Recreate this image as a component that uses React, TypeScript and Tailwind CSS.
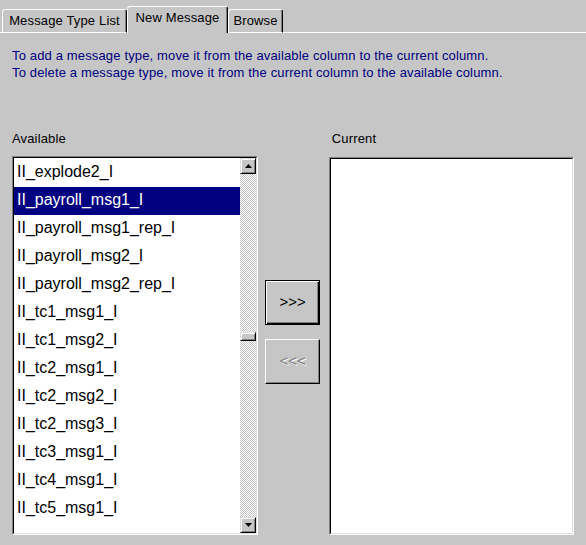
import React from 'react';

const items = [
  'II_explode2_I',
  'II_payroll_msg1_I',
  'II_payroll_msg1_rep_I',
  'II_payroll_msg2_I',
  'II_payroll_msg2_rep_I',
  'II_tc1_msg1_I',
  'II_tc1_msg2_I',
  'II_tc2_msg1_I',
  'II_tc2_msg2_I',
  'II_tc2_msg3_I',
  'II_tc3_msg1_I',
  'II_tc4_msg1_I',
  'II_tc5_msg1_I',
];

const ScrollButton = ({ up }: { up: boolean }) => (
  <div className="flex h-[16px] w-[16px] items-center justify-center border border-t-[#dfdfdf] border-l-[#dfdfdf] border-r-black border-b-black bg-[#c6c6c6] shadow-[inset_1px_1px_#fff,inset_-1px_-1px_#808080]">
    <svg width="7" height="4" viewBox="0 0 7 4">
      {up ? <polygon points="3.5,0 7,4 0,4" fill="#000" /> : <polygon points="0,0 7,0 3.5,4" fill="#000" />}
    </svg>
  </div>
);

const Tab = ({ label, width, active }: { label: string; width: string; active?: boolean }) => (
  <div
    className={`${width} flex items-center justify-center rounded-t-[3px] border-l border-t border-r border-l-white border-t-white border-r-black shadow-[inset_-1px_0_#808080] ${
      active ? 'h-[27px] pb-[4px]' : 'h-[24px] border-b border-b-white'
    }`}
  >
    <span>{label}</span>
  </div>
);

const App = () => {
  return (
    <div className="h-[545px] w-[586px] overflow-hidden bg-[#c6c6c6] font-['Liberation_Sans',Arial,sans-serif] text-[13px] tracking-[0.15px] text-black">
      {/* tabs */}
      <div className="flex h-[33px] items-end">
        <div className="h-px w-[2px] bg-white" />
        <Tab label="Message Type List" width="w-[125px]" />
        <Tab label="New Message" width="w-[101px]" active />
        <Tab label="Browse" width="w-[55px]" />
        <div className="h-px flex-1 bg-white" />
      </div>

      <div className="px-[12px] pt-[14px]">
        <div className="leading-[17px] text-[#000080]">
          <div>To add a message type, move it from the available column to the current column.</div>
          <div>To delete a message type, move it from the current column to the available column.</div>
        </div>

        <div className="mt-[49px] flex items-start">
          {/* available */}
          <div className="w-[248px]">
            <div className="h-[17px] leading-[17px]">Available</div>
            <div className="mt-[9px] h-[379px] border border-t-[#808080] border-l-[#808080] border-r-white border-b-white">
              <div className="flex h-full border border-t-black border-l-black border-r-[#dfdfdf] border-b-[#dfdfdf] bg-white">
                <div className="flex-1 overflow-hidden pt-px text-[16px] tracking-normal">
                  {items.map((it, i) => (
                    <div
                      key={it}
                      className={`h-[28px] pl-[3px] leading-[25px] ${i === 1 ? 'bg-[#000080] text-white' : ''}`}
                    >
                      {it}
                    </div>
                  ))}
                </div>
                <div className="flex w-[16px] flex-col bg-[repeating-conic-gradient(#fff_0_25%,#c6c6c6_0_50%)] bg-[length:2px_2px]">
                  <ScrollButton up />
                  <div className="mt-[158px] h-[9px] w-[16px] border border-t-[#dfdfdf] border-l-[#dfdfdf] border-r-black border-b-black bg-[#c6c6c6] shadow-[inset_1px_1px_#fff,inset_-1px_-1px_#808080]" />
                  <div className="flex-1" />
                  <ScrollButton up={false} />
                </div>
              </div>
            </div>
          </div>

          {/* buttons */}
          <div className="flex w-[71px] flex-col items-start gap-[14px] pl-[7px] pt-[150px]">
            <button className="flex h-[45px] w-[55px] items-center justify-center border border-black bg-[#c6c6c6] text-[15px] tracking-normal shadow-[inset_1px_1px_#fff,inset_-1px_-1px_#000,inset_-2px_-2px_#808080]">
              &gt;&gt;&gt;
            </button>
            <button className="flex h-[45px] w-[55px] items-center justify-center border border-t-white border-l-white border-r-black border-b-black bg-[#c6c6c6] text-[15px] tracking-normal text-[#808080] shadow-[inset_-1px_-1px_#808080] [text-shadow:1px_1px_#fff]">
              &lt;&lt;&lt;
            </button>
          </div>

          {/* current */}
          <div className="w-[247px]">
            <div className="h-[17px] pl-[3px] leading-[17px]">Current</div>
            <div className="mt-[10px] h-[378px] border border-t-[#808080] border-l-[#808080] border-r-white border-b-white">
              <div className="h-full border border-t-black border-l-black border-r-[#dfdfdf] border-b-[#dfdfdf] bg-white" />
            </div>
          </div>
        </div>
      </div>
    </div>
  );
};

export default App;
